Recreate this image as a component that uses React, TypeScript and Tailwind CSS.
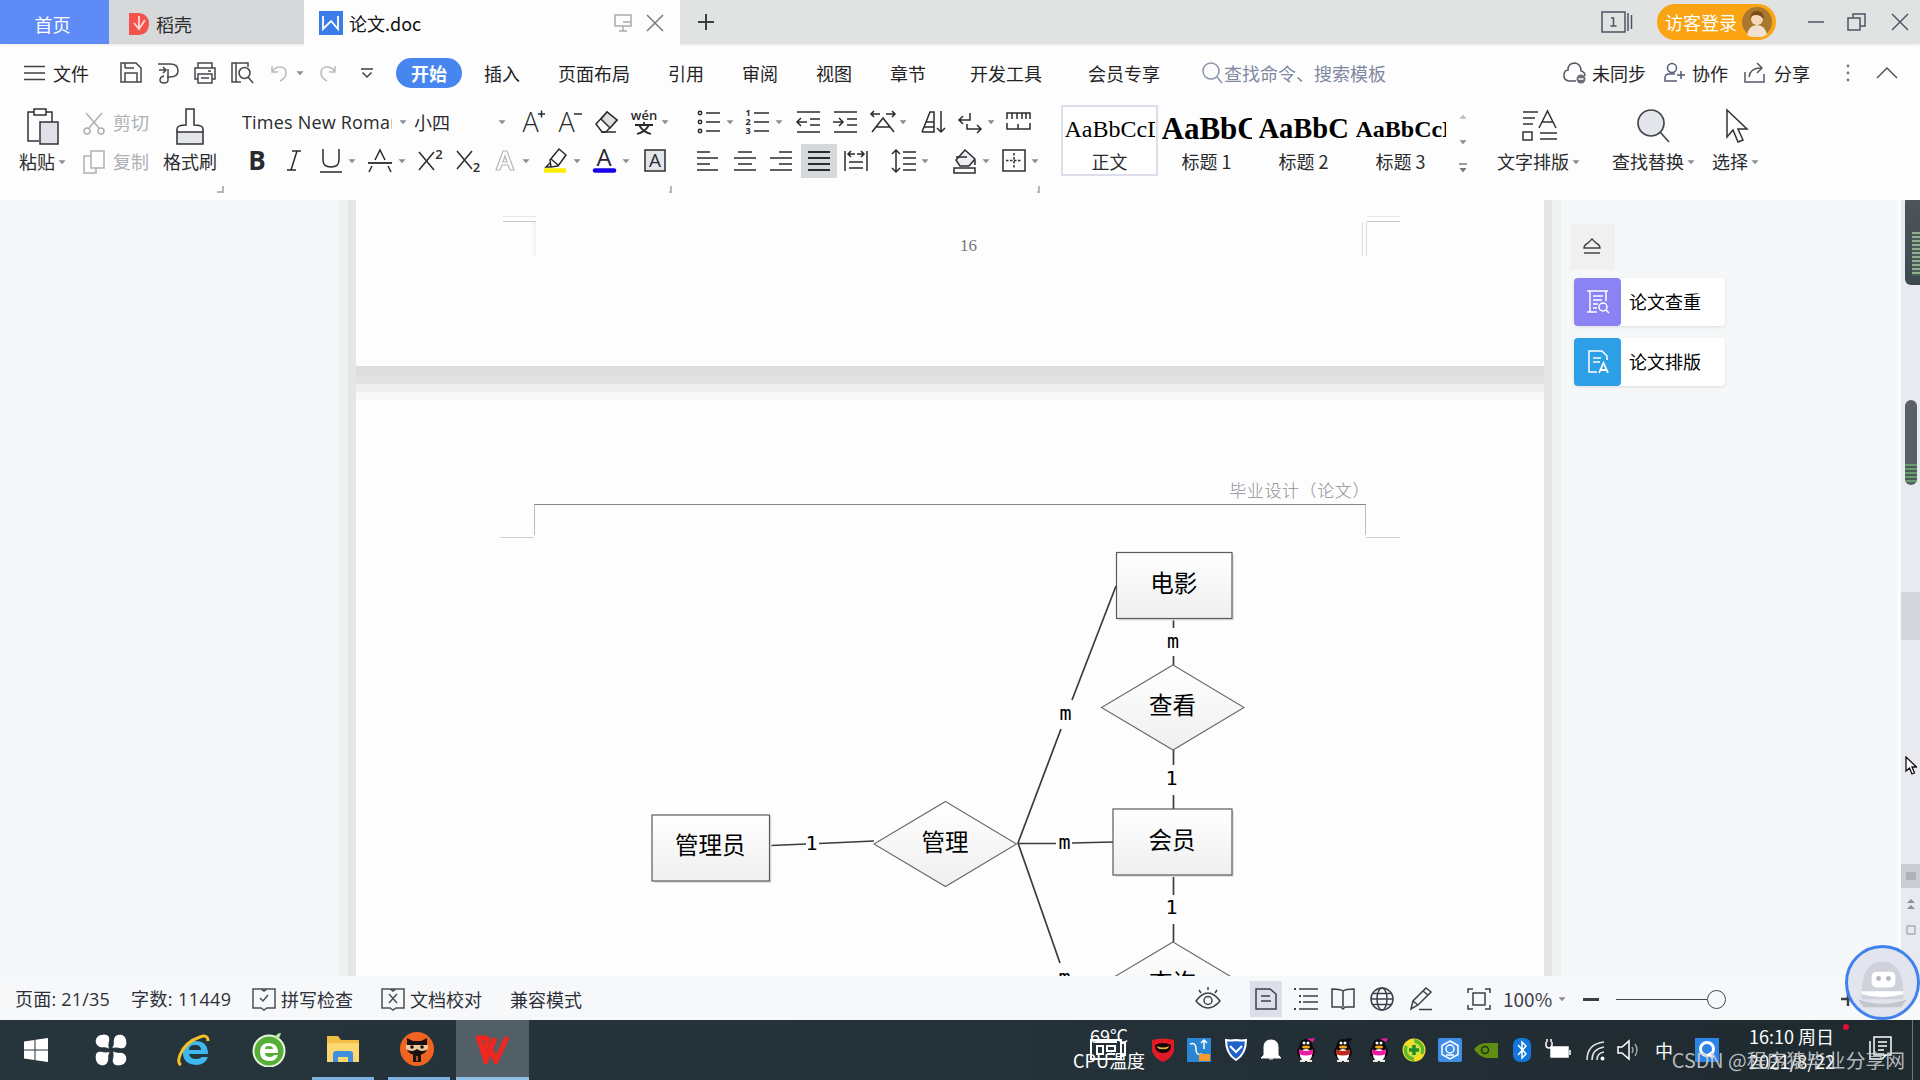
import React from "react";

interface IconProps {
  className?: string;
  children: React.ReactNode;
}

function Icon({ className = "", children }: IconProps) {
  return (
    <svg
      viewBox="0 0 24 24"
      className={`size-6 shrink-0 overflow-visible ${className}`}
      fill="none"
      stroke="currentColor"
      strokeWidth="1.5"
    >
      {children}
    </svg>
  );
}

function Caret({ className = "" }: { className?: string }) {
  return (
    <svg viewBox="0 0 8 8" className={`size-2 shrink-0 text-[#8b8b93] ${className}`}>
      <path d="M0.5 2.2h7L4 6.2z" fill="currentColor" />
    </svg>
  );
}

function Letter({ x = 12, y = 20, size = 21, weight = 300, children }: { x?: number; y?: number; size?: number; weight?: number; children: string }) {
  return (
    <text x={x} y={y} fontSize={size} fontWeight={weight} textAnchor="middle" fill="currentColor" stroke="none" fontFamily="'Open Sans', sans-serif">
      {children}
    </text>
  );
}

function TitleBar() {
  return (
    <header className="flex h-11 shrink-0 items-center bg-[#e1e3e3] text-[18px] text-[#2c2c2e] shadow-[0_1px_2px_#e8eaea]">
      <div className="flex h-full w-[109px] items-center justify-center bg-[#5f8bf6] pt-1 pr-1 text-white">首页</div>
      <div className="flex h-full w-[195px] items-center bg-[#d6d8da] pt-1 pl-5">
        <svg viewBox="0 0 20 22" className="h-[22px] w-5">
          <path d="M0 0h10q10 1 10 11t-10 11H0z" fill="#f4524d" />
          <path d="M5 10l5 6 6-9M10 3v13" fill="none" stroke="#ffd9d6" strokeWidth="1.800" />
        </svg>
        <span className="ml-[7px]">稻壳</span>
      </div>
      <div className="flex h-[46px] w-[376px] items-center self-start bg-[#fdfdfd] pl-[15px] text-[#111]">
        <svg viewBox="0 0 24 24" className="size-6">
          <rect width="24" height="24" fill="#3a7ce8" />
          <path d="M4 5v13l8-8 7 8V5" fill="none" stroke="#fff" strokeWidth="1.8" />
        </svg>
        <span className="ml-1.5">论文.doc</span>
        <Icon className="ml-auto text-[#a9abae]">
          <path d="M4 4h16v11H4zM12 15v5M8 20h8M12 11h8" />
        </Icon>
        <Icon className="mr-[13px] ml-2 text-[#77797c]">
          <path d="M4 4l16 16M20 4L4 20" />
        </Icon>
      </div>
      <Icon className="ml-[14px] text-[#3b3d40]">
        <path d="M12 4v16M4 12h16" strokeWidth="2" />
      </Icon>
      <div className="ml-auto flex items-center text-[#4c5566]">
        <svg viewBox="0 0 32 22" className="h-[22px] w-8" fill="none" stroke="currentColor" strokeWidth="1.5">
          <path d="M1 1h23v20H1zM27 2v18M30.500 4v14" />
          <path d="M10 7h2.500v8M9.500 15h6" />
        </svg>
        <div className="ml-6 flex h-9 w-[119px] items-center rounded-full bg-[#faa413] pl-2 text-white">
          访客登录
          <svg viewBox="0 0 30 30" className="ml-[5px] size-[30px]">
            <circle cx="15" cy="15" r="15" fill="#a9782c" />
            <path d="M5 28q2-10 10-10t10 10q-10 5-20 0" fill="#f3e0d0" />
            <circle cx="15" cy="12" r="6" fill="#f3d9b8" />
            <path d="M8 13q0-9 7-9t7 9q-3-5-8-5t-6 5" fill="#7d4b1c" />
          </svg>
        </div>
        <Icon className="ml-7">
          <path d="M4 12h16" />
        </Icon>
        <Icon className="ml-[17px]">
          <path d="M3 8h12v12H3zM8 8V4h12v12h-5" />
        </Icon>
        <Icon className="mr-2 ml-[19px]">
          <path d="M4 4l16 16M20 4L4 20" />
        </Icon>
      </div>
    </header>
  );
}

const menuItems = [
  { label: "插入", ml: "ml-[22px]" },
  { label: "页面布局", ml: "ml-[38px]" },
  { label: "引用", ml: "ml-[38px]" },
  { label: "审阅", ml: "ml-[38px]" },
  { label: "视图", ml: "ml-[38px]" },
  { label: "章节", ml: "ml-[38px]" },
  { label: "开发工具", ml: "ml-[44px]" },
  { label: "会员专享", ml: "ml-[46px]" },
];

function MenuBar() {
  return (
    <nav className="flex h-[58px] shrink-0 items-center pr-[21px] pl-6 text-[18px] text-[#242426]">
      <svg viewBox="0 0 22 16" className="h-4 w-[22px]" stroke="#3e4044" strokeWidth="1.5">
        <path d="M0 1.500h21M0 8h21M0 14.500h21" />
      </svg>
      <span className="ml-[7px]">文件</span>
      <div className="flex items-center text-[#44474c]">
        <Icon className="ml-[30px]">
          <path d="M2 2h15l5 5v14H2zM6 21v-9h12v9M6 7h9M6 2v5" />
        </Icon>
        <Icon className="ml-[13px]">
          <path d="M2 3h12q8 0 8 6.500T14 16h-3M12 8v11q0 3-4 3t-4-3 4-4M3 9h7M7 6l3 3-3 3" />
        </Icon>
        <Icon className="ml-[13px]">
          <path d="M5 7V2h14v5M5 18H2V7h20v11h-3M5 13h14v9H5zM8 17h8M15 10h3" />
        </Icon>
        <Icon className="ml-[13px]">
          <path d="M11 21H2V2h16v4M6 2v19" />
          <circle cx="14.500" cy="12" r="5.500" />
          <path d="M18 16l5 6" />
        </Icon>
        <Icon className="ml-[13px] text-[#b9bbbe]">
          <path d="M5 5v6h6M5 11q3-5 8-5 6 0 6 6 0 5-6 8" />
        </Icon>
        <Caret className="ml-[5px]" />
        <Icon className="ml-3 text-[#b9bbbe]">
          <path d="M19 5v6h-6M19 11q-3-5-8-5-6 0-6 6 0 5 6 8" />
        </Icon>
        <svg viewBox="0 0 12 12" className="ml-[21px] size-3" fill="none" stroke="#3e4044" strokeWidth="1.500">
          <path d="M0 2h12M1.500 5.500L6 10l4.500-4.500" />
        </svg>
      </div>
      <span className="ml-[23px] flex h-[30px] w-[66px] items-center justify-center rounded-full bg-[#4686ee] font-bold text-white">开始</span>
      {menuItems.map((item) => (
        <span key={item.label} className={`${item.ml} whitespace-nowrap`}>
          {item.label}
        </span>
      ))}
      <Icon className="ml-10 text-[#8b93a6]">
        <circle cx="11" cy="10" r="8" />
        <path d="M17 16l5 6" />
      </Icon>
      <span className="whitespace-nowrap text-[#8088a0]">查找命令、搜索模板</span>
      <div className="ml-auto flex items-center whitespace-nowrap">
        <Icon className="text-[#555a63]">
          <path d="M14 20H7q-6-1-5-7 1-4 4-4 0-7 7-7 6 1 6 8 4 1 4 5" />
          <circle cx="19" cy="18" r="4.500" fill="#6b7077" stroke="none" />
          <path d="M16.500 18h5" stroke="#fff" />
        </Icon>
        <span className="ml-1.5">未同步</span>
        <Icon className="ml-4 text-[#555a78]">
          <circle cx="10" cy="7" r="4.500" />
          <path d="M15 20H3v-3q0-4 4-4h6M15 14h8M19 10v8" />
        </Icon>
        <span className="ml-1.5">协作</span>
        <Icon className="ml-[15px] text-[#555a63]">
          <path d="M2 11v10h19v-8M6 16q1-9 12-9M14 2l5 5-5 5" />
        </Icon>
        <span className="ml-[7px]">分享</span>
        <svg viewBox="0 0 6 20" className="ml-[35px] h-5 w-1.5" fill="#777a80">
          <circle cx="3" cy="3" r="1.400" />
          <circle cx="3" cy="10" r="1.400" />
          <circle cx="3" cy="17" r="1.400" />
        </svg>
        <Icon className="ml-6 text-[#55585e]">
          <path d="M2 17L12 7l10 10" />
        </Icon>
      </div>
    </nav>
  );
}

function CornerMark({ className }: { className: string }) {
  return <span className={`size-[7px] border-r-2 border-b-2 border-[#b4b6b8] ${className}`} />;
}

function ClipboardGroup() {
  return (
    <div className="flex w-[242px] shrink-0 pl-[18px] text-[18px]">
      <div className="flex w-[49px] flex-col items-center pt-1.5">
        <svg viewBox="0 0 32 37" className="h-[37px] w-8" fill="none" stroke="#303236" strokeWidth="1.500">
          <path d="M12 33H1V4h24v10" />
          <path d="M7 1h12v6H7z" fill="#fff" />
          <path d="M13 14h18v22H13z" fill="#dfe1e6" />
        </svg>
        <div className="mt-[3px] flex items-center whitespace-nowrap">
          粘贴
          <Caret className="ml-[3px]" />
        </div>
      </div>
      <div className="ml-[15px] flex flex-col gap-3 pt-[7px] text-[#adb0b4]">
        <div className="flex items-center whitespace-nowrap">
          <Icon>
            <circle cx="5" cy="20" r="3" />
            <circle cx="19" cy="20" r="3" />
            <path d="M4 2l13 15M20 2L7 17" />
          </Icon>
          <span className="ml-[7px]">剪切</span>
        </div>
        <div className="flex items-center whitespace-nowrap">
          <Icon>
            <path d="M9 1h13v17H9zM9 6H2v17h12v-5" />
          </Icon>
          <span className="ml-[7px]">复制</span>
        </div>
      </div>
      <div className="ml-[14px] flex flex-col items-center pt-1.5">
        <svg viewBox="0 0 30 37" className="h-[37px] w-[30px]" fill="none" stroke="#303236" strokeWidth="1.500">
          <path d="M2 24h26v12H2z" fill="#e3e5e9" />
          <path d="M2 24v-3q0-4 9-4V1h8v16q9 0 9 4v3" />
        </svg>
        <span className="mt-[3px] whitespace-nowrap">格式刷</span>
      </div>
      <CornerMark className="mt-[84px]" />
    </div>
  );
}

function FontRow() {
  return (
    <div className="flex h-[38px] items-center whitespace-nowrap">
      <span className="w-[150px] overflow-hidden font-['Open_Sans','Noto_Sans_CJK_SC',sans-serif] text-[18px] tracking-[0.2px]">Times New Roman</span>
      <Caret className="ml-[7px]" />
      <span className="ml-[7px] w-9 text-[18px]">小四</span>
      <Caret className="ml-12" />
      <Icon className="ml-[15px]">
        <Letter x={9.5} y={22} size={27}>A</Letter>
        <path d="M17 4h7M20.500 0.500v7" />
      </Icon>
      <Icon className="ml-[13px]">
        <Letter x={8.5} y={22} size={27}>A</Letter>
        <path d="M16 4h8" />
      </Icon>
      <Icon className="ml-[13px]">
        <path d="M1 14L12 2l10 8-11 12H7z" />
        <path d="M6 9l9 9 7-8-10-8z" fill="#dcdee2" />
        <path d="M6 22h15" />
      </Icon>
      <Icon className="ml-[13px]">
        <Letter y={10} size={13} weight={600}>wén</Letter>
        <path d="M3 15h18M12 12v3M7 15q4 7 12 9M17 15q-4 7-12 9" strokeWidth="1.800" />
      </Icon>
      <Caret className="ml-[5px]" />
      <Icon className="ml-7">
        <path d="M9 3h14M9 12h14M9 21h14" />
        <circle cx="3" cy="3" r="1.700" />
        <circle cx="3" cy="12" r="1.700" />
        <circle cx="3" cy="21" r="1.700" />
      </Icon>
      <Caret className="ml-[5px]" />
      <Icon className="ml-[11px]">
        <path d="M9 3h15M9 12h15M9 21h15" />
        <Letter x={3} y={6} size={9} weight={700}>1</Letter>
        <Letter x={3} y={15} size={9} weight={700}>2</Letter>
        <Letter x={3} y={24} size={9} weight={700}>3</Letter>
      </Icon>
      <Caret className="ml-1.5" />
      <Icon className="ml-[13px]">
        <path d="M1 2h23M14 9h10M14 15h10M1 22h23M1 12h10M5 8l-4 4 4 4" />
      </Icon>
      <Icon className="ml-[13px]">
        <path d="M1 2h23M14 9h10M14 15h10M1 22h23M0 12h9M6 8l4 4-4 4" />
      </Icon>
      <Icon className="ml-[14px]">
        <path d="M1 22L12 8l11 14M5 17h14M0 4h9M15 4h9M3 1L0 4l3 3M21 1l3 3-3 3" />
      </Icon>
      <Caret className="ml-1" />
      <Icon className="ml-[14px]">
        <path d="M1 22L9 2h4v20H1M5 12h8M3 17h10M20 1v21M16 18l4 4 4-4" />
      </Icon>
      <Icon className="ml-[13px]">
        <path d="M12 3v7H2M5 6l-4 4 4 4M9 14v5h14M19 15l4 4-4 4" />
      </Icon>
      <Caret className="ml-[5px]" />
      <Icon className="ml-[11px]">
        <path d="M1 9V3h23v6M6 3v6M11 3v6M16 3v6M20 3v6M1 13v6h7M12 14v5M24 13v6h-8M8 19h8" />
      </Icon>
    </div>
  );
}

function FormatRow() {
  return (
    <div className="flex h-[38px] items-center pt-px pl-[3px]">
      <Icon>
        <Letter y={21} size={26} weight={700}>B</Letter>
      </Icon>
      <Icon className="ml-[13px]">
        <path d="M10 2h9M5 21h9M15 2L9 21" />
      </Icon>
      <Icon className="ml-[13px]">
        <path d="M4 0v11q0 7 8 7t8-7V0M1 23h22" />
      </Icon>
      <Caret className="ml-[5px]" />
      <Icon className="ml-3">
        <path d="M7 11l5-10 5 10M4 17l-3 6M20 17l3 6" />
        <path d="M0 14h24" strokeWidth="1.800" />
      </Icon>
      <Caret className="ml-1.5" />
      <Icon className="ml-3">
        <path d="M1 3l15 18M16 3L1 21" />
        <Letter x={21} y={10} size={13} weight={600}>2</Letter>
      </Icon>
      <Icon className="ml-[14px]">
        <path d="M1 2l15 18M16 2L1 20" />
        <Letter x={20.5} y={23} size={13} weight={600}>2</Letter>
      </Icon>
      <Icon className="ml-[13px] text-[#b5b7ba]">
        <path d="M3 21L10 2h4l7 19h-4l-2-5H9l-2 5zM12 7l-2 6h4z" strokeWidth="1.200" />
      </Icon>
      <Caret className="ml-[5px]" />
      <Icon className="ml-[13px]">
        <path d="M7 11L16 0l7 6-8 11-7 1zM8 10l7 6M7 14l-4 4h5" />
        <path d="M1 21.500h22" stroke="#f7ee00" strokeWidth="4.500" />
      </Icon>
      <Caret className="ml-1.5" />
      <Icon className="ml-[11px]">
        <Letter y={17} size={24} weight={400}>A</Letter>
        <path d="M3 21.500h19" stroke="#1500e8" strokeWidth="4.500" strokeLinecap="round" />
      </Icon>
      <Caret className="ml-1.5" />
      <Icon className="ml-[13px]">
        <rect x="2" y="1" width="20" height="21" fill="#e3e6ea" />
        <Letter y={18} size={19} weight={400}>A</Letter>
      </Icon>
      <Icon className="ml-[29px]">
        <path d="M1 3h13M1 9h21M1 15h13M1 21h21" />
      </Icon>
      <Icon className="ml-[13px]">
        <path d="M5 3h14M1 9h22M5 15h14M1 21h22" />
      </Icon>
      <Icon className="ml-3">
        <path d="M10 3h13M1 9h22M10 15h13M1 21h22" />
      </Icon>
      <span className="ml-2 flex h-[34px] w-9 items-center justify-center bg-[#d6d9dc]">
        <Icon>
          <path d="M1 3h22M1 9h22M1 15h22M1 21h22" strokeWidth="1.800" />
        </Icon>
      </span>
      <Icon className="ml-[7px]">
        <path d="M1 2v20M23 2v20M5 13h14M5 19h14M4 5h7M13 5h7M7 2L4 5l3 3M17 2l3 3-3 3" />
      </Icon>
      <Icon className="ml-6">
        <path d="M4 2v20M0 5l4-4 4 4M0 19l4 4 4-4M11 3h13M11 9h13M11 15h13M11 21h13" />
      </Icon>
      <Caret className="ml-[5px]" />
      <Icon className="ml-6">
        <path d="M3 11L12 1l10 9-6 7H7z" fill="#eceef1" />
        <path d="M3 8h11M22 11v5M1 19h21v5H1z" />
      </Icon>
      <Caret className="ml-[5px]" />
      <Icon className="ml-3">
        <path d="M1 1h22v21H1z" />
        <path d="M12 4v16M4 11.500h16" strokeDasharray="2.500 1.500" />
      </Icon>
      <Caret className="ml-[5px]" />
    </div>
  );
}

const docStyles = [
  { sample: "AaBbCcDd", name: "正文", cls: "text-[24px]", box: "border-2 border-[#dcdeea] bg-white" },
  { sample: "AaBbCc", name: "标题 1", cls: "text-[31px] font-bold", box: "border-2 border-transparent" },
  { sample: "AaBbCc", name: "标题 2", cls: "text-[28.500px] font-bold", box: "border-2 border-transparent" },
  { sample: "AaBbCcDd", name: "标题 3", cls: "text-[24px] font-bold", box: "border-2 border-transparent" },
];

function Ribbon() {
  return (
    <section className="flex h-[98px] shrink-0 text-[#2a2b2e]">
      <ClipboardGroup />
      <div className="flex w-[798px] shrink-0 flex-col pt-px">
        <FontRow />
        <FormatRow />
        <div className="flex pt-[7px]">
          <CornerMark className="ml-[427px]" />
          <CornerMark className="ml-[365px]" />
        </div>
      </div>
      <div className="ml-[21px] flex pt-[3px]">
        {docStyles.map((s) => (
          <div key={s.name} className={`flex h-[71px] w-[97px] flex-col items-center ${s.box}`}>
            <div className="flex h-11 w-[90px] items-center overflow-hidden whitespace-nowrap text-black">
              <span className={`font-['Liberation_Serif',serif] ${s.cls}`}>{s.sample}</span>
            </div>
            <span className="text-[18px] leading-[20px]">{s.name}</span>
          </div>
        ))}
        <div className="flex w-7 flex-col items-center gap-[17px] pt-2">
          <Caret className="rotate-180 opacity-60" />
          <Caret />
          <svg viewBox="0 0 8 10" className="h-2.5 w-2 text-[#77777f]">
            <path d="M0 1h8" stroke="currentColor" strokeWidth="1.500" />
            <path d="M0.500 5h7L4 9.500z" fill="currentColor" />
          </svg>
        </div>
      </div>
      <div className="ml-[20px] flex text-[18px] whitespace-nowrap">
        <div className="flex w-[83px] flex-col pt-1.5">
          <svg viewBox="0 0 36 34" className="ml-[25px] h-9 w-9" fill="none" stroke="#303236" strokeWidth="1.500">
            <path d="M1 3h15M1 9h12M1 15h10M18 30h17M18 24h17M1 23h9v8H1z" />
            <path d="M17 19L25.500 2 34 19M20 13h11" />
          </svg>
          <div className="mt-1 flex items-center">
            文字排版
            <Caret className="ml-[3px]" />
          </div>
        </div>
        <div className="ml-8 flex w-[83px] flex-col pt-1.5">
          <svg viewBox="0 0 34 36" className="ml-6 h-9 w-[34px]" fill="none" stroke="#44474c" strokeWidth="1.700">
            <circle cx="15" cy="15" r="13" fill="#e4e6ec" />
            <path d="M24 24l9 10" />
          </svg>
          <div className="mt-1 flex items-center">
            查找替换
            <Caret className="ml-[3px]" />
          </div>
        </div>
        <div className="ml-[17px] flex flex-col pt-1.5">
          <svg viewBox="0 0 24 36" className="ml-[14px] h-9 w-6" fill="none" stroke="#303236" strokeWidth="1.500">
            <path d="M1 2v27l6-7 5 12 5-2-5-11h9z" />
          </svg>
          <div className="mt-1 flex items-center">
            选择
            <Caret className="ml-[3px]" />
          </div>
        </div>
      </div>
    </section>
  );
}

const diamonds = [
  { x: 1173, y: 707.5, label: "查看" },
  { x: 945.5, y: 844, label: "管理" },
  { x: 1173, y: 984.5, label: "查询" },
];

const boxes = [
  { x: 1116.5, y: 552.5, w: 115.5, label: "电影", ty: 592 },
  { x: 1113, y: 809, w: 119, label: "会员", ty: 849 },
  { x: 652, y: 815, w: 117.5, label: "管理员", ty: 854 },
];

const marks = [
  { x: 1173, y: 647.5, t: "m" },
  { x: 1065.5, y: 720, t: "m" },
  { x: 1064.5, y: 849, t: "m" },
  { x: 1064.5, y: 984, t: "m" },
  { x: 1171.5, y: 785, t: "1" },
  { x: 1171.5, y: 914, t: "1" },
  { x: 811.5, y: 849.5, t: "1" },
];

// Entity relation diagram; coordinates are window pixels
function ErDiagram() {
  return (
    <svg viewBox="356 540 1188 436" className="h-[436px] w-[1188px]" fontFamily="'Noto Sans CJK SC', sans-serif">
      <defs>
        <linearGradient id="shape" x1="0" y1="0" x2="0" y2="1">
          <stop offset="0" stopColor="#ffffff" />
          <stop offset="1" stopColor="#efeff0" />
        </linearGradient>
      </defs>
      <g stroke="#3c3c3e" strokeWidth="1.7" fill="none">
        <path d="M1173.500 618v10M1173.500 656v9M1173.500 750v15M1173.500 795v14M1173.500 875v20M1173.500 924v18" />
        <path d="M1116 586L1072 700M1061 729L1018 843L1060 963M1018 843.500h38M1072 843l41-1M771 845.500l35-1.500M819 843.500l55-2.500" />
      </g>
      {boxes.map((b) => (
        <g key={b.label}>
          <rect x={b.x + 2} y={b.y + 2} width={b.w} height="66" fill="#e2e2e3" />
          <rect x={b.x} y={b.y} width={b.w} height="66" fill="url(#shape)" stroke="#5a5a5c" strokeWidth="1.2" />
          <text x={b.x + b.w / 2 - 0.5} y={b.ty} fontSize="23.500" textAnchor="middle">{b.label}</text>
        </g>
      ))}
      {diamonds.map((d) => (
        <g key={d.label}>
          <path d={`M${d.x} ${d.y - 42.5}l71 42.500l-71 42.500l-71.500-42.500z`} fill="url(#shape)" stroke="#6a6a6c" strokeWidth="1.1" />
          <text x={d.x - 0.5} y={d.y + 6.5} fontSize="23.500" textAnchor="middle">{d.label}</text>
        </g>
      ))}
      {marks.map((m) => (
        <text key={`${m.x}-${m.y}`} x={m.x} y={m.y} fontSize="20" textAnchor="middle" fontFamily="'DejaVu Sans Mono', monospace">{m.t}</text>
      ))}
    </svg>
  );
}

function Pages() {
  return (
    <div className="flex w-[1188px] shrink-0 flex-col bg-[#fdfdfd] shadow-[0_0_0_8px_#e5e7e6,0_0_0_17px_#eef1f0]">
      <div className="flex h-[166px] justify-between px-[144px] pt-4 font-['Liberation_Serif',serif] text-[17px] text-[#77777c]">
        <div className="w-9">
          <div className="ml-[3px] h-1.5 w-[33px] border-t border-b border-t-[#e6e6e6] border-b-[#cacaca]" />
          <div className="ml-[33px] h-[34px] w-[3px] bg-[#f4f4f4]" />
        </div>
        <span className="pt-[17px] pl-10">16</span>
        <div className="w-[39px]">
          <div className="ml-1.5 h-1.5 w-[33px] border-t border-b border-t-[#e6e6e6] border-b-[#cacaca]" />
          <div className="ml-px h-[34px] w-[5px] border-r border-l border-[#dcdcdc]" />
        </div>
      </div>
      <div className="h-2.5 bg-[#dddddd]" />
      <div className="h-2 bg-[#e2e2e2]" />
      <div className="h-2 bg-[#eeeeee]" />
      <div className="h-2 bg-[#f8f8f8]" />
      <div className="flex h-[104px] items-end justify-end pr-[174px] pb-0.5 text-[17px] font-light tracking-[0.6px] text-[#8f8f96]">
        毕业设计（论文）
      </div>
      <div className="flex h-9 px-[144px]">
        <div className="h-[34px] w-[34px] shrink-0 border-b border-[#d0d0d0]" />
        <div className="h-[31px] w-[832px] border border-b-0 border-[#bcbcbe] border-t-[#858587]" />
        <div className="h-[34px] w-[34px] border-b border-[#d0d0d0]" />
      </div>
      <ErDiagram />
    </div>
  );
}

function ToolCard({ color, label, children }: { color: string; label: string; children: React.ReactNode }) {
  return (
    <div className="flex h-12 w-[151px] items-center rounded bg-white text-[18px] text-black shadow-[0_1px_3px_#dcdedd]">
      <div className={`flex h-12 w-[47px] items-center justify-center rounded-sm text-white ${color}`}>{children}</div>
      <span className="mb-px ml-2">{label}</span>
    </div>
  );
}

function SideTools() {
  return (
    <aside className="ml-[26px] flex flex-col pt-6">
      <div className="flex h-[46px] w-[45px] items-center justify-center bg-[#f0f0f0] pr-0.5 pb-0.5">
        <svg viewBox="0 0 18 18" className="size-[18px]" fill="none" stroke="#444" strokeWidth="1.400">
          <path d="M1 11q0-3 4-5l4-4 4 4q4 2 4 5zM1 16h16" />
        </svg>
      </div>
      <div className="mt-2 ml-1 flex flex-col gap-3">
        <ToolCard color="bg-[#8b83f3]" label="论文查重">
          <Icon>
            <path d="M1 1h21M4 1v21h7M20 1v10M1 22h10M7 6h10M7 10h9M7 14h5M7 18h4" />
            <circle cx="17" cy="17" r="4" />
            <path d="M20 20l3 3" />
          </Icon>
        </ToolCard>
        <ToolCard color="bg-[#2d9fe6]" label="论文排版">
          <Icon>
            <path d="M11 22H3V1h13l5 5v4M7 8h8M7 12h7" />
            <path d="M13 23l4.500-10L22 23M14.500 20h6" strokeWidth="1.800" />
          </Icon>
        </ToolCard>
      </div>
    </aside>
  );
}

// Level meters that dock on the right edge over the scrollbar
function ScrollTrack() {
  return (
    <div className="relative ml-auto flex w-[23px] flex-col border-l-4 border-[#fafbfb] bg-[#e9eaf0]">
      <div className="absolute -top-1 right-0 h-[89px] w-[15px] rounded-l-md bg-linear-to-b from-[#4f555c] to-[#3c4a50] pt-9 pl-[7px]">
        <div className="h-11 bg-[repeating-linear-gradient(#8fb08a_0_2px,#4a5c58_2px_4px)]" />
      </div>
      <div className="absolute top-[200px] right-[3px] h-[85px] w-3 rounded-md bg-[#596066] pt-16">
        <div className="h-[18px] bg-[repeating-linear-gradient(#6a9a70_0_2px,#4a5c54_2px_4px)]" />
      </div>
      <div className="mt-[392px] h-12 w-full bg-[#d3d6da]" />
      <svg viewBox="0 0 12 20" className="absolute top-[556px] right-[3px] h-5 w-3">
        <path d="M1 1v14l3.500-3 2.500 6 2.500-1-2.500-6h4.500z" fill="#fff" stroke="#111" strokeWidth="1.300" />
      </svg>
      <div className="mt-[224px] flex h-6 items-center justify-center bg-[#cbccd4]">
        <span className="h-2 w-2.5 bg-[#b0b2bb]" />
      </div>
      <svg viewBox="0 0 14 50" className="mt-2 ml-[3px] h-[50px] w-3.5" fill="#8d8f9a">
        <path d="M3 7l4-4 4 4zM3 13l4-4 4 4z" />
        <path d="M3 30h8v8H3z" fill="none" stroke="#8d8f9a" />
      </svg>
    </div>
  );
}

function StatusBar() {
  return (
    <footer className="relative flex h-11 shrink-0 items-center bg-[#f7f8fa] pt-0.5 pl-[15px] text-[18px] whitespace-nowrap text-[#2d3038]">
      <span className="w-[116px] font-['Open_Sans','Noto_Sans_CJK_SC',sans-serif] text-[18px] tracking-[0.2px]">页面: 21/35</span>
      <span className="w-[121px] font-['Open_Sans','Noto_Sans_CJK_SC',sans-serif] text-[18px] tracking-[0.4px]">字数: 11449</span>
      <Icon className="text-[#4c4f56]">
        <path d="M1 2h22v19h-8l-3 2-3-2H1zM8 11l3 3 5-6M9 2l3 2 3-2" />
      </Icon>
      <span className="ml-[5px] w-[72px]">拼写检查</span>
      <Icon className="ml-[28px] text-[#4c4f56]">
        <path d="M1 2h22v19h-8l-3 2-3-2H1zM8 7l8 9M16 7l-8 9M9 2l3 2 3-2" />
      </Icon>
      <span className="ml-[5px] w-[72px]">文档校对</span>
      <span className="ml-7">兼容模式</span>
      <div className="ml-auto flex items-center pr-[65px] text-[#3c3f4a]">
        <Icon>
          <path d="M0 14q12-16 24 0-12 14-24 0zM12 0v3M3 3l2 3M21 3l-2 3" />
          <circle cx="12" cy="13.500" r="4" />
        </Icon>
        <span className="ml-[30px] flex h-9 w-8 items-center justify-center bg-[#dcdee9]">
          <Icon>
            <path d="M2 2h14l6 5v15H2zM7 9h9M7 14h10" />
          </Icon>
        </span>
        <Icon className="ml-3">
          <path d="M5 2h19M9 9h15M9 15h15M5 22h19" />
          <path d="M0 2h2M5 9h2M5 15h2M0 22h2" strokeWidth="2" />
        </Icon>
        <Icon className="ml-[13px]">
          <path d="M12 4q-3-2-11-2v18h9l2 2 2-2h9V2q-8 0-11 2zv16" />
        </Icon>
        <Icon className="ml-[15px]">
          <circle cx="12" cy="12" r="11" />
          <ellipse cx="12" cy="12" rx="5" ry="11" />
          <path d="M1 12h22M3 6.500h18M3 17.500h18" />
        </Icon>
        <Icon className="ml-[15px]">
          <path d="M2 22l2-8L17 1l5 4L9 18zM14 4l5 4M4 14l5 4M10 22.500h13" />
        </Icon>
        <Icon className="ml-[34px]">
          <path d="M1 6V2h5M18 2h5v4M1 18v4h5M18 22h5v-4M6 6h12v12H6z" />
        </Icon>
        <span className="ml-[12px] w-[49px] font-['Noto_Sans_CJK_SC',sans-serif] text-[19px]">100%</span>
        <Caret className="ml-1.5" />
        <span className="ml-[17px] h-[3px] w-4 bg-[#3c3f44]" />
        <span className="ml-[17px] h-px w-[91px] bg-[#44464a]" />
        <span className="size-[19px] rounded-full border-[1.500px] border-[#44464a]" />
        <span className="ml-[115px] flex w-[14px] justify-center text-[#3c3f44]">
          <svg viewBox="0 0 14 14" className="size-3.5">
            <path d="M0 7h14M7 0v14" stroke="currentColor" strokeWidth="2.500" />
          </svg>
        </span>
      </div>
      {/* floating assistant */}
      <div className="absolute right-0 bottom-0 size-[75px] overflow-hidden rounded-full border-[3px] border-[#3f82ee] bg-[#e3e5ee]">
        <svg viewBox="0 0 70 70" className="size-full">
          <path d="M14 46q0-32 21-32t21 32v6H14z" fill="#cfd2da" />
          <rect x="24" y="24" width="24" height="16" rx="5" fill="#fff" />
          <circle cx="31" cy="31" r="2.500" fill="#b5b8c2" />
          <circle cx="41" cy="31" r="2.500" fill="#b5b8c2" />
          <path d="M14 44h42v3q-21 6-42 0z" fill="#fff" />
          <path d="M10 52q25 9 50 0l-6 8H16z" fill="#c4c6ce" />
        </svg>
      </div>
    </footer>
  );
}

function Penguin({ scarf, bow, className = "" }: { scarf: string; bow: string; className?: string }) {
  return (
    <Icon className={className}>
      <g stroke="none">
        <ellipse cx="12" cy="14" rx="9" ry="8" fill="#0b0b0d" />
        <ellipse cx="12" cy="8" rx="6.500" ry="7" fill="#0b0b0d" />
        <ellipse cx="12" cy="17" rx="6" ry="6" fill="#fff" />
        <circle cx="10" cy="5" r="1.500" fill="#fff" />
        <circle cx="14" cy="5" r="1.500" fill="#fff" />
        <ellipse cx="12" cy="9" rx="4" ry="1.500" fill="#f5a81c" />
        <path d="M5 11q7 4 14 0v5q-7 3-14 0z" fill={scarf} />
        <path d="M13 1l8-1-2 4z" fill={bow} />
        <path d="M6 22h5v2H6zM13 22h5v2h-5z" fill="#f0e6d8" />
      </g>
    </Icon>
  );
}

function Taskbar() {
  return (
    <div className="relative flex h-[60px] shrink-0 items-center bg-linear-to-r from-[#26343b] via-[#25323a] to-[#1f2a2f] text-white">
      <svg viewBox="0 0 24 24" className="ml-6 size-6" fill="#fff">
        <path d="M0 3.500L10.500 2v9.500H0zM11.500 1.800L24 0v11.500H11.500zM0 12.500h10.500V22L0 20.500zM11.500 12.500H24V24l-12.500-1.800z" />
      </svg>
      <svg viewBox="0 0 34 34" className="ml-[46px] size-[34px]" fill="#fff" stroke="#26343b" strokeWidth="1.200">
        <path d="M16 17q-4-3-8-2Q1 14 1 8q1-7 9-7 6 0 6 6-2 5 0 10z" />
        <path d="M17 16q3-4 2-8 1-7 7-7 7 1 7 9 0 6-6 6-5-2-10 0z" />
        <path d="M18 17q4 3 8 2 7 1 7 7-1 7-9 7-6 0-6-6 2-5 0-10z" />
        <path d="M17 18q-3 4-2 8-1 7-7 7-7-1-7-9 0-6 6-6 5 2 10 0z" />
      </svg>
      <svg viewBox="0 0 34 34" className="ml-12 size-[34px]" fill="none">
        <path d="M32 21H13q1 5 7 5 4 0 6-2h6q-3 8-12 8Q7 31 7 20T19 8q13 0 13 13zM13 17h12q0-5-6-5t-6 5z" fill="#3fb7ef" />
        <path d="M32 8Q32 1 24 4 9 9 4 22q-3 8 1 10" stroke="#f5c02c" strokeWidth="3" />
      </svg>
      <svg viewBox="0 0 34 34" className="ml-[42px] size-[34px]">
        <circle cx="17" cy="18" r="15.500" fill="#55ae35" stroke="#e6f6de" strokeWidth="2" />
        <path d="M26 20H13q0 4 5 4 3 0 4-2h4q-2 6-8 6-10 0-10-9t9-9q9 0 9 10zM13 16h8q0-3-4-3T13 16z" fill="#fff" />
        <path d="M22 5q3-5 7-5-1 4-3 6z" fill="#bfe6a5" />
      </svg>
      <div className="ml-[26px] flex h-full w-[62px] items-center justify-center border-b-[3px] border-[#7db3de]">
        <svg viewBox="0 0 34 28" className="h-7 w-[34px]">
          <path d="M1 1h11l3 4h18v22H1z" fill="#f0bd45" />
          <path d="M1 8h32v19H1z" fill="#fbd872" />
          <path d="M7 27v-8q0-3 3-3h14q3 0 3 3v8h-5v-5H12v5z" fill="#3f8fe0" />
        </svg>
      </div>
      <div className="ml-[14px] flex h-full w-[62px] items-center justify-center border-b-[3px] border-[#7db3de] pr-1">
        <svg viewBox="0 0 36 36" className="size-9">
          <circle cx="18" cy="18" r="17" fill="#ee6420" />
          <path d="M8 7l6 3h8l6-3v9q0 8-10 8T8 16z" fill="#17110f" />
          <path d="M14 22h8v9h-8z" fill="#17110f" />
          <path d="M7 14h22v4q-6 4-11 0-5 4-11 0z" fill="#f0c9a0" />
          <circle cx="13" cy="16" r="1.800" fill="#17110f" />
          <circle cx="23" cy="16" r="1.800" fill="#17110f" />
          <path d="M18 25v5" stroke="#ee6420" strokeWidth="1.500" />
        </svg>
      </div>
      <div className="ml-1.5 flex h-full w-[73px] items-center justify-center border-b-[3px] border-[#8fbfe6] bg-[#535f66]">
        <svg viewBox="0 0 36 30" className="h-[30px] w-9" fill="none" stroke="#f0261f" strokeWidth="5">
          <path d="M1 4h9q4 0 2 5l-3 9M4 5l7 22L20 4M16 16l5 11L32 3" />
        </svg>
      </div>
      <div className="relative ml-auto flex h-[60px] w-[76px] flex-col items-center pt-[3px] text-[18px] leading-[25px]">
        <span className="h-[25px]">69°C</span>
        <span className="whitespace-nowrap">CPU温度</span>
        <svg viewBox="0 0 36 24" className="absolute top-[17px] left-[19px] h-6 w-9" fill="none" stroke="#fff" strokeWidth="2">
          <path d="M1 3h30v19H1zM7 9h6v8H7zM17 9h8v5h-8zM17 17h8M31 6h4v12h-4M5 5h22" />
        </svg>
      </div>
      <div className="flex items-center">
        <Icon className="ml-1">
          <g stroke="none">
            <path d="M1 2q11-3 22 0v11q-3 8-11 11Q4 21 1 13z" fill="#e21a26" />
            <path d="M4 7q8-4 16 0 0 8-8 8T4 7z" fill="#140606" />
            <path d="M6 8q6 3 12 0-1 4-6 3-5 1-6-3z" fill="#e8b43c" />
          </g>
        </Icon>
        <Icon className="ml-[12px]">
          <rect width="24" height="24" fill="#2a86d2" stroke="none" />
          <path d="M3 6q6-2 6 5t6 5M17 2v9M14 5l3-3 3 3" stroke="#fff" />
          <path d="M12 16h11v7H12z" fill="#f59a2b" stroke="none" />
        </Icon>
        <Icon className="ml-[13px]">
          <path d="M12 2q-6 1-10 0 0 14 10 20 10-6 10-20-4 1-10 0z" fill="#1e62c8" stroke="#fff" strokeWidth="2" />
          <path d="M6 8l6 6 6-6" stroke="#fff" strokeWidth="2" />
        </Icon>
        <Icon className="ml-[11px]">
          <path d="M5 17V9q0-7 7-7t7 7v8l3 3H2zM10 21h4" fill="#fff" stroke="#fff" strokeWidth="1" />
        </Icon>
        <Penguin className="ml-[11px]" scarf="#ec1ba4" bow="#ec1ba4" />
        <Penguin className="ml-[13px]" scarf="#b92a1c" bow="#0b0b0d" />
        <Penguin className="ml-[12px]" scarf="#ec1ba4" bow="#ec1ba4" />
        <Icon className="ml-[11px]">
          <circle cx="12" cy="12" r="11.500" fill="#f4dd25" stroke="none" />
          <path d="M12 1a11 11 0 0 1 9 16Q12 12 12 1zM12 23A11 11 0 0 1 3 7q9 4 9 16z" fill="#5fb82c" stroke="none" />
          <circle cx="12" cy="12" r="7" fill="#d8e23a" stroke="none" />
          <path d="M12 7v10M7 12h10" stroke="#1f8a2c" strokeWidth="3.500" />
        </Icon>
        <Icon className="ml-[12px]">
          <rect width="24" height="24" rx="2" fill="#3f8ee6" stroke="none" />
          <path d="M12 3l8 4.500v9L12 21l-8-4.500v-9z" stroke="#fff" />
          <circle cx="12" cy="11" r="4" stroke="#fff" />
          <path d="M8 17h8" stroke="#fff" />
        </Icon>
        <Icon className="ml-[12px]">
          <path d="M0 11q5-6 12-6h12v15H12Q4 18 0 11z" fill="#5f8f12" stroke="none" />
          <circle cx="11" cy="12" r="3.500" stroke="#22300c" />
        </Icon>
        <Icon className="ml-[12px]">
          <rect x="3" y="0" width="18" height="24" rx="7" fill="#1176d8" stroke="none" />
          <path d="M8 7l8 9-4 4V4l4 4-8 9" stroke="#fff" />
        </Icon>
        <Icon className="ml-[12px]">
          <rect x="5" y="9" width="17" height="10" fill="#fff" stroke="#fff" />
          <path d="M24 12v5M0 4v3q0 3 3 3t3-3V4M1 1v3M5 1v3" stroke="#fff" />
        </Icon>
        <Icon className="ml-[13px]">
          <path d="M4 22Q4 6 21 4M9 22q0-11 12-13M14 22q0-7 7-8" stroke="#dfe3e5" />
          <circle cx="19.500" cy="20.500" r="2" fill="#fff" stroke="none" />
        </Icon>
        <Icon className="ml-[10px]">
          <path d="M1 9v6h4l7 6V3L5 9z" stroke="#fff" />
          <path d="M15 9q2 3 0 6M18 6q4 6 0 12" stroke="#9aa3a8" />
        </Icon>
        <span className="ml-[14px] w-5 text-[18px]">中</span>
        <Icon className="ml-5">
          <rect width="24" height="24" fill="#2d83e6" stroke="none" />
          <circle cx="12" cy="11" r="6.500" stroke="#fff" strokeWidth="3" />
          <path d="M14 15l4 5" stroke="#fff" strokeWidth="3" />
        </Icon>
      </div>
      <div className="ml-[25px] flex h-full w-[96px] flex-col items-center pt-1 text-[18px] leading-[25px] whitespace-nowrap">
        <span className="pr-px">16:10 周日</span>
        <span className="text-[18.500px]">2021/8/22</span>
      </div>
      <span className="mb-[46px] ml-[3px] size-1.5 rounded-full bg-[#e01030]" />
      <Icon className="mb-1 ml-[19px]">
        <path d="M6 1h17v18H6zM2 5v18h12l4-4M10 6h9M10 10h9M10 14h6" stroke="#fff" />
      </Icon>
      <span className="mr-[7px] ml-5 h-full w-px bg-[#6d767b]" />
      <span className="absolute right-[15px] bottom-1.5 text-[19.800px] leading-[28px] whitespace-nowrap text-[#c9cccd]/90">CSDN @程序猿毕业分享网</span>
    </div>
  );
}

export default function App() {
  return (
    <div className="flex h-[1080px] w-[1920px] flex-col overflow-hidden bg-[#fdfdfd] font-['Noto_Sans_CJK_SC',sans-serif]">
      <TitleBar />
      <MenuBar />
      <Ribbon />
      <main className="flex h-[776px] shrink-0 overflow-hidden bg-[#f5f7f8] pl-[356px]">
        <Pages />
        <SideTools />
        <ScrollTrack />
      </main>
      <StatusBar />
      <Taskbar />
    </div>
  );
}
